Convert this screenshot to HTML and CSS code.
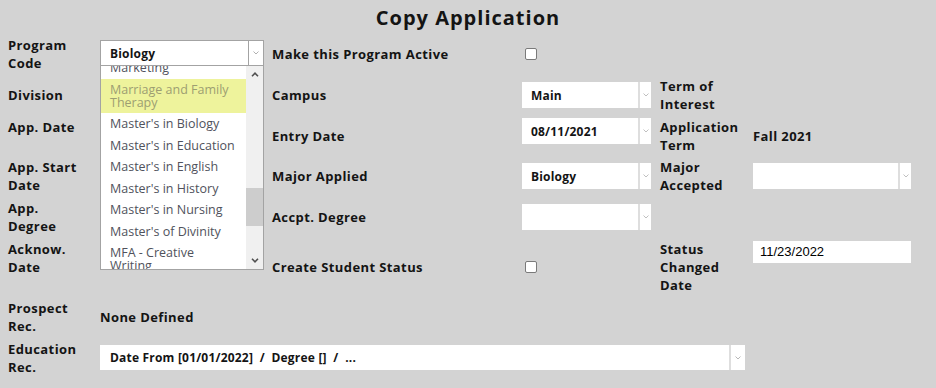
FILE: index.html
```html
<!DOCTYPE html>
<html>
<head>
<meta charset="utf-8">
<title>Copy Application</title>
<link rel="stylesheet" href="styles.css">
</head>
<body>
<h1 class="title">Copy Application</h1>
<div class="form">
  <!-- row 1 -->
  <div class="lbl">Program<br>Code</div>
  <div class="dd-wrap">
    <div class="psel">
      <span class="val">Biology</span>
      <span class="arr"><svg width="6" height="4" viewBox="0 0 6 4"><polyline points="0.5,0.5 3,3 5.5,0.5" fill="none" stroke="#b0b0b0" stroke-width="1"/></svg></span>
    </div>
    <div class="listbox">
      <div class="items">
        <ul class="list">
          <li>Marketing</li>
          <li class="hl">Marriage and Family<br>Therapy</li>
          <li>Master's in Biology</li>
          <li>Master's in Education</li>
          <li>Master's in English</li>
          <li>Master's in History</li>
          <li>Master's in Nursing</li>
          <li>Master's of Divinity</li>
          <li>MFA - Creative<br>Writing</li>
        </ul>
      </div>
      <div class="sbar">
        <div class="sbtn"><svg width="8" height="5" viewBox="0 0 8 5"><polyline points="1,4.2 4,1.2 7,4.2" fill="none" stroke="#505050" stroke-width="1.6"/></svg></div>
        <div class="track"><div class="thumb"></div></div>
        <div class="sbtn"><svg width="8" height="5" viewBox="0 0 8 5"><polyline points="1,0.8 4,3.8 7,0.8" fill="none" stroke="#505050" stroke-width="1.6"/></svg></div>
      </div>
    </div>
  </div>
  <div class="lbl">Make this Program Active</div>
  <div><span class="cb"></span></div>
  <div></div>
  <div></div>

  <!-- row 2 -->
  <div class="lbl">Division</div>
  <div></div>
  <div class="lbl">Campus</div>
  <div class="sel"><span class="val">Main</span><span class="arr"><svg width="6" height="4" viewBox="0 0 6 4"><polyline points="0.5,0.5 3,3 5.5,0.5" fill="none" stroke="#c0c0c0" stroke-width="1"/></svg></span></div>
  <div class="lbl">Term of<br>Interest</div>
  <div></div>

  <!-- row 3 -->
  <div class="lbl top">App. Date</div>
  <div></div>
  <div class="lbl">Entry Date</div>
  <div class="sel top"><span class="val">08/11/2021</span><span class="arr"><svg width="6" height="4" viewBox="0 0 6 4"><polyline points="0.5,0.5 3,3 5.5,0.5" fill="none" stroke="#c0c0c0" stroke-width="1"/></svg></span></div>
  <div class="lbl">Application<br>Term</div>
  <div class="lbl">Fall 2021</div>

  <!-- row 4 -->
  <div class="lbl">App. Start<br>Date</div>
  <div></div>
  <div class="lbl">Major Applied</div>
  <div class="sel"><span class="val">Biology</span><span class="arr"><svg width="6" height="4" viewBox="0 0 6 4"><polyline points="0.5,0.5 3,3 5.5,0.5" fill="none" stroke="#c0c0c0" stroke-width="1"/></svg></span></div>
  <div class="lbl">Major<br>Accepted</div>
  <div class="sel wide"><span class="val"></span><span class="arr"><svg width="6" height="4" viewBox="0 0 6 4"><polyline points="0.5,0.5 3,3 5.5,0.5" fill="none" stroke="#c0c0c0" stroke-width="1"/></svg></span></div>

  <!-- row 5 -->
  <div class="lbl">App.<br>Degree</div>
  <div></div>
  <div class="lbl">Accpt. Degree</div>
  <div class="sel"><span class="val"></span><span class="arr"><svg width="6" height="4" viewBox="0 0 6 4"><polyline points="0.5,0.5 3,3 5.5,0.5" fill="none" stroke="#c0c0c0" stroke-width="1"/></svg></span></div>
  <div></div>
  <div></div>

  <!-- row 6 -->
  <div class="lbl top r6">Acknow.<br>Date</div>
  <div></div>
  <div class="lbl r6c">Create Student Status</div>
  <div class="r6c"><span class="cb"></span></div>
  <div class="lbl top r6">Status<br>Changed<br>Date</div>
  <div class="txt top"><span>11/23/2022</span></div>

  <!-- row 7 -->
  <div class="lbl">Prospect<br>Rec.</div>
  <div class="lbl span">None Defined</div>
  <div></div>
  <div></div>
  <div></div>

  <!-- row 8 -->
  <div class="lbl">Education<br>Rec.</div>
  <div class="sel edu"><span class="val">Date From [01/01/2022]&nbsp;&nbsp;/&nbsp;&nbsp;Degree []&nbsp;&nbsp;/&nbsp;&nbsp;...</span><span class="arr"><svg width="6" height="4" viewBox="0 0 6 4"><polyline points="0.5,0.5 3,3 5.5,0.5" fill="none" stroke="#b8b8b8" stroke-width="1"/></svg></span></div>
</div>
</body>
</html>
```
FILE: styles.css
```css
html, body {
  margin: 0;
  padding: 0;
}
body {
  background: #d3d3d3;
  color: #141414;
  font-family: "Open Sans", "DejaVu Sans", sans-serif;
}
.title {
  margin: 0;
  height: 34px;
  line-height: 34px;
  text-align: center;
  font-size: 20px;
  font-weight: 700;
  letter-spacing: 1px;
  padding-top: 1px;
  margin-bottom: 1px;
}
.form {
  display: grid;
  grid-template-columns: 92px 172px 250px 138px 93px 1fr;
  grid-template-rows: 36px 46px 36px 44px 38px 58px 46px 35px;
  padding-left: 8px;
  font-size: 13px;
  font-weight: 700;
  line-height: 18px;
  letter-spacing: 0.4px;
}
.form > * {
  align-self: center;
}
.form > .top {
  align-self: start;
}
.form > .r6 {
  margin-top: 4px;
}
.form > .r6c {
  margin-top: 4px;
}
.lbl.span {
  grid-column: 2 / 4;
}

/* program code select + open list */
.dd-wrap {
  position: relative;
  width: 164px;
  height: 26px;
  align-self: start;
  margin-top: 4px;
}
.psel {
  box-sizing: border-box;
  height: 26px;
  border: 1px solid #a3a3a3;
  background: #fff;
  display: flex;
}
.psel .val {
  flex: 1;
  padding-left: 9px;
  line-height: 25px;
  font-size: 12px;
  letter-spacing: 0.2px;
}
.psel .arr {
  width: 14px;
  border-left: 1px solid #a3a3a3;
  display: flex;
  align-items: center;
  justify-content: center;
}
.listbox {
  position: absolute;
  top: 100%;
  left: 0;
  width: 164px;
  height: 204px;
  box-sizing: border-box;
  border: 1px solid #a3a3a3;
  border-top: 0;
  background: #fff;
  display: flex;
  z-index: 2;
}
.items {
  flex: 1;
  overflow: hidden;
}
.list {
  list-style: none;
  margin: -9px 0 0;
  padding: 0;
  font-weight: 400;
  font-size: 12.5px;
  line-height: 13px;
  letter-spacing: 0;
  color: #50525c;
  white-space: nowrap;
}
.list li {
  padding: 4.25px 4px 4.25px 9px;
}
.list li.hl {
  background: #eef39c;
  color: #9d9e72;
}
.sbar {
  width: 17px;
  background: #f0f0f0;
  display: flex;
  flex-direction: column;
}
.sbtn {
  height: 17px;
  display: flex;
  align-items: center;
  justify-content: center;
}
.track {
  flex: 1;
}
.thumb {
  margin-top: 105px;
  height: 38px;
  background: #cdcdcd;
}

/* checkbox */
.cb {
  display: block;
  box-sizing: border-box;
  width: 12px;
  height: 12px;
  margin-left: 3px;
  border: 1px solid #7a7a7a;
  border-radius: 2px;
  background: #fff;
}

/* plain selects */
.sel {
  width: 129px;
  height: 26px;
  background: #fff;
  display: flex;
}
.sel .val {
  flex: 1;
  padding-left: 9px;
  line-height: 27px;
  font-size: 12px;
  letter-spacing: 0.2px;
  white-space: nowrap;
  overflow: hidden;
}
.sel .arr {
  width: 11px;
  border-left: 2px solid #dedede;
  display: flex;
  align-items: center;
  justify-content: center;
}
.sel.wide {
  width: 158px;
}
.sel.edu {
  grid-column: 2 / 6;
  width: 645px;
  height: 25px;
}
.sel.edu .val {
  padding-left: 10px;
  line-height: 25px;
}
.sel.edu .arr {
  width: 14px;
}

/* text input */
.txt {
  width: 158px;
  height: 22px;
  margin-top: 5px;
  background: #fff;
  font-family: "Liberation Sans", Arial, sans-serif;
  font-weight: 400;
  font-size: 13px;
  line-height: 22px;
  letter-spacing: 0;
  color: #000;
}
.txt span {
  padding-left: 7px;
}
```
